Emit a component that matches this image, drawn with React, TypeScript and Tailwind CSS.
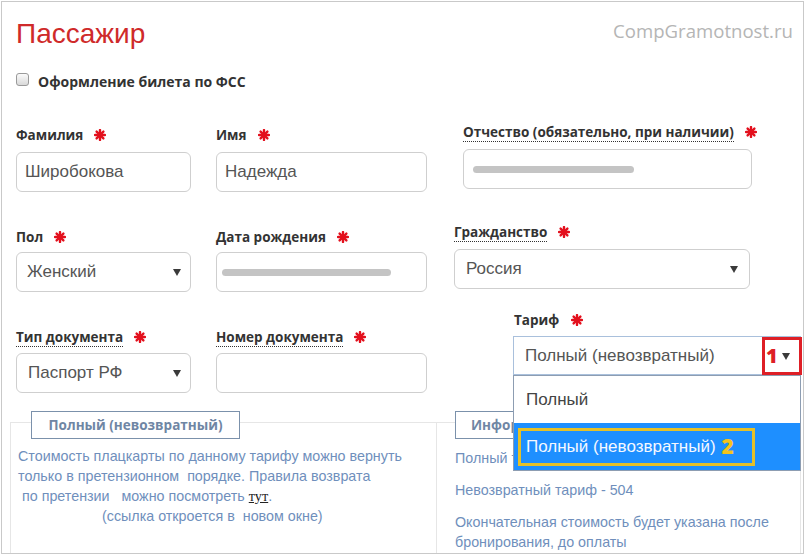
import React from "react";

const Star = () => (
  <svg width="12" height="12" viewBox="0 0 12 12" className="block shrink-0">
    <g stroke="#e3101d" strokeWidth="2.4" strokeLinecap="round">
      <line x1="6" y1="1" x2="6" y2="11" />
      <line x1="1" y1="6" x2="11" y2="6" />
      <line x1="2.6" y1="2.6" x2="9.4" y2="9.4" />
      <line x1="9.4" y1="2.6" x2="2.6" y2="9.4" />
    </g>
  </svg>
);

const Arrow = () => (
  <svg width="8" height="7" viewBox="0 0 8 7" className="block">
    <path d="M0 0 H8 L4 7 Z" fill="#3a3a3a" />
  </svg>
);

const Label = ({ text, dotted, gap = "gap-[11px]" }: { text: string; dotted?: boolean; gap?: string }) => (
  <div className={`flex items-center h-[18px] whitespace-nowrap ${gap}`}>
    <span
      className={`whitespace-nowrap font-['Open_Sans',sans-serif] font-bold text-[13.5px] leading-[18px] text-[#333] ${
        dotted ? "border-b border-dotted border-[#333]" : ""
      }`}
    >
      {text}
    </span>
    <Star />
  </div>
);

const Bar = ({ w }: { w: string }) => <div className={`h-[7px] rounded-full bg-[#c4c4c4] ${w}`} />;

export default function App() {
  return (
    <div className="w-[806px] h-[557px] bg-white p-[1px] font-['Liberation_Sans',Arial,sans-serif]">
      <div className="relative w-[803px] h-[553px] border border-[#c9c9c9] overflow-hidden">
        {/* header */}
        <div className="flex justify-between pl-[14px] pr-[10px] pt-[16px]">
          <h1 className="text-[28px] leading-[32px] text-[#cf2a2a]">Пассажир</h1>
          <div className="font-['Open_Sans',sans-serif] text-[18.6px] leading-[26px] text-[#b5b5b5]">
            CompGramotnost.ru
          </div>
        </div>

        {/* checkbox */}
        <div className="flex items-start pl-[14px] mt-[23px]">
          <div className="w-[13px] h-[13px] rounded-[3px] border border-[#9a9a9a] bg-gradient-to-b from-[#fbfbfb] to-[#d9d9d9]" />
          <span className="ml-[9px] font-['Open_Sans',sans-serif] font-bold text-[14px] leading-[18px] text-[#333]">
            Оформление билета по ФСС
          </span>
        </div>

        {/* row 1 */}
        <div className="flex items-start pl-[14px] mt-[35px]">
          <div className="w-[175px] flex flex-col gap-[8px]">
            <Label text="Фамилия" />
            <div className="h-[40px] rounded-[6px] border border-[#cfcfcf] flex items-center px-[8px] text-[17px] text-[#555]">
              Широбокова
            </div>
          </div>
          <div className="w-[211px] ml-[25px] flex flex-col gap-[8px]">
            <Label text="Имя" />
            <div className="h-[40px] rounded-[6px] border border-[#cfcfcf] flex items-center px-[8px] text-[17px] text-[#555]">
              Надежда
            </div>
          </div>
          <div className="w-[289px] ml-[36px] -mt-[3px] flex flex-col gap-[8px]">
            <Label text="Отчество (обязательно, при наличии)" dotted />
            <div className="h-[40px] rounded-[6px] border border-[#cfcfcf] flex items-center px-[9px]">
              <Bar w="w-[161px]" />
            </div>
          </div>
        </div>

        {/* row 2 */}
        <div className="flex items-start pl-[14px] mt-[36px]">
          <div className="w-[175px] flex flex-col gap-[6px]">
            <Label text="Пол" />
            <div className="h-[40px] rounded-[6px] border border-[#cfcfcf] flex items-center justify-between pl-[10px] pr-[9px] text-[17px] text-[#555]">
              Женский
              <Arrow />
            </div>
          </div>
          <div className="w-[211px] ml-[25px] flex flex-col gap-[6px]">
            <Label text="Дата рождения" />
            <div className="h-[40px] rounded-[6px] border border-[#cfcfcf] flex items-center px-[5px]">
              <Bar w="w-[169px]" />
            </div>
          </div>
          <div className="w-[296px] ml-[27px] -mt-[5px] flex flex-col gap-[8px]">
            <Label text="Гражданство" dotted />
            <div className="h-[40px] rounded-[6px] border border-[#cfcfcf] flex items-center justify-between pl-[11px] pr-[11px] text-[17px] text-[#555]">
              Россия
              <Arrow />
            </div>
          </div>
        </div>

        {/* row 3 */}
        <div className="flex items-start pl-[14px] mt-[36px]">
          <div className="w-[175px] flex flex-col gap-[7px]">
            <Label text="Тип документа" dotted />
            <div className="h-[40px] rounded-[6px] border border-[#cfcfcf] flex items-center justify-between pl-[11px] pr-[9px] text-[17px] text-[#555]">
              Паспорт РФ
              <Arrow />
            </div>
          </div>
          <div className="w-[211px] ml-[25px] flex flex-col gap-[7px]">
            <Label text="Номер документа" dotted />
            <div className="h-[40px] rounded-[6px] border border-[#cfcfcf]" />
          </div>
          <div className="w-[288px] ml-[86px] -mt-[17px] flex flex-col gap-[7px] relative z-10">
            <div className="pl-[1px]">
              <Label text="Тариф" gap="gap-[12px]" />
            </div>
            <div className="relative">
              <div className="h-[39px] border border-[#a9c0dc] bg-white flex items-center pl-[11px] text-[17px] text-[#555]">
                Полный (невозвратный)
              </div>
              {/* annotation 1 */}
              <div className="absolute right-[-1px] top-[1px] w-[40px] h-[38px] border-[3px] border-[#de1f26] flex items-center pl-[1px] gap-[4px]">
                <span className="font-['Open_Sans',sans-serif] font-extrabold text-[20px] leading-none text-[#de1f26]">1</span>
                <Arrow />
              </div>
              {/* open list */}
              <div className="absolute left-0 top-[39px] w-[288px] border border-[#8d9db2] bg-white">
                <div className="h-[47px] flex items-center pl-[12px] text-[17px] text-[#444]">Полный</div>
                <div className="h-[47px] bg-[#1e8fff] flex items-center pl-[4px]">
                  <div className="h-[38px] w-[237px] border-[3px] border-[#e4c02a] flex items-center pl-[5px] gap-[6px]">
                    <span className="text-[17px] text-[#f4f8ff]">Полный (невозвратный)</span>
                    <span className="font-['Open_Sans',sans-serif] font-extrabold text-[21px] leading-none text-[#f3c31c]">2</span>
                  </div>
                </div>
              </div>
            </div>
          </div>
        </div>

        {/* bottom info boxes */}
        <div className="flex pl-[8px] mt-[18px]">
          <div className="w-[426px] h-[160px] mt-[11px] border-l border-t border-[#e6e6e6]">
            <div className="-mt-[12px] ml-[20px] w-[209px] h-[28px] border border-[#7b91ab] bg-white flex items-center justify-center font-['Open_Sans',sans-serif] font-bold text-[13.5px] text-[#6f86a4]">
              Полный (невозвратный)
            </div>
            <div className="mt-[7px] pl-[7px] text-[14.3px] leading-[20px] text-[#6f8fbc]">
              <div className="whitespace-pre">Стоимость плацкарты по данному тарифу можно вернуть</div>
              <div className="whitespace-pre">только в претензионном  порядке. Правила возврата</div>
              <div className="whitespace-pre"> по претензии   можно посмотреть <span className="text-[#222] underline font-['Liberation_Serif',serif]">тут</span>.</div>
              <div className="whitespace-pre pl-[84px]">(ссылка откроется в  новом окне)</div>
            </div>
          </div>
          <div className="w-[365px] h-[160px] mt-[11px] border-l border-t border-r border-[#e6e6e6]">
            <div className="-mt-[12px] ml-[18px] w-[200px] h-[28px] border border-[#7b91ab] bg-white flex items-center pl-[15px]">
              <div className="w-[43px] overflow-hidden whitespace-nowrap font-['Open_Sans',sans-serif] font-bold text-[13.5px] text-[#6f86a4]">
                Информация
              </div>
            </div>
            <div className="mt-[9px] pl-[18px] text-[14.3px] leading-[20px] text-[#6f8fbc]">
              <div className="w-[58px] overflow-hidden whitespace-nowrap">Полный тариф - 1052</div>
              <div className="mt-[12px]">Невозвратный тариф - 504</div>
              <div className="mt-[12px]">Окончательная стоимость будет указана после</div>
              <div>бронирования, до оплаты</div>
            </div>
          </div>
        </div>
      </div>
    </div>
  );
}
